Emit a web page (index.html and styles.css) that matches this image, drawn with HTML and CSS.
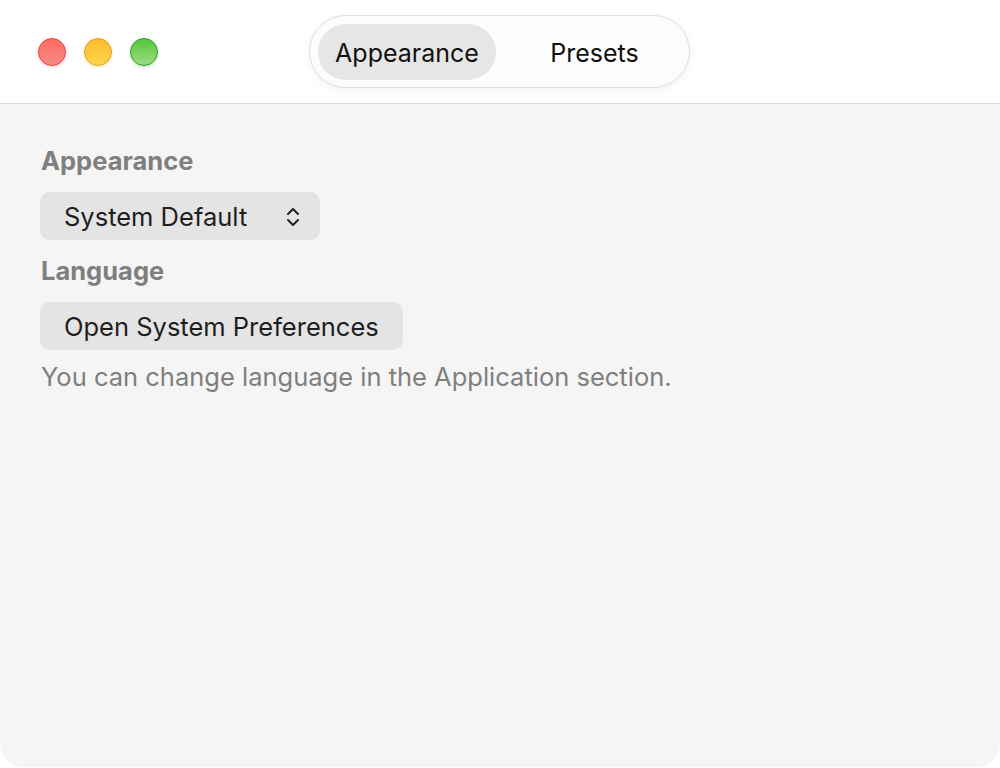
FILE: index.html
```html
<!DOCTYPE html>
<html lang="en">
<head>
<meta charset="utf-8">
<title>Settings</title>
<link rel="stylesheet" href="styles.css">
</head>
<body>
<div class="window">
  <header class="titlebar">
    <div class="lights">
      <span class="light red"></span>
      <span class="light yellow"></span>
      <span class="light green"></span>
    </div>
    <nav class="segmented">
      <span class="seg active">Appearance</span>
      <span class="seg">Presets</span>
    </nav>
  </header>
  <main class="content">
    <h2 class="label">Appearance</h2>
    <div class="select">
      <span>System Default</span>
      <svg class="chev" width="14" height="22" viewBox="0 0 14 22" fill="none" stroke="#222" stroke-width="2" stroke-linecap="round" stroke-linejoin="round">
        <path d="M2 8 L7 3 L12 8"/>
        <path d="M2 14 L7 19 L12 14"/>
      </svg>
    </div>
    <h2 class="label">Language</h2>
    <div class="button">Open System Preferences</div>
    <p class="note">You can change language in the Application section.</p>
  </main>
</div>
</body>
</html>
```
FILE: styles.css
```css
html, body {
  margin: 0;
  padding: 0;
  background: #ffffff;
}
body {
  font-family: Inter, "Noto Sans", "Liberation Sans", sans-serif;
  width: 1000px;
  height: 768px;
  overflow: hidden;
}
.window {
  width: 1000px;
  height: 767px;
  display: flex;
  flex-direction: column;
  background: #f5f5f5;
  border-radius: 0 0 24px 24px;
  overflow: hidden;
}
.titlebar {
  height: 104px;
  flex: 0 0 104px;
  background: #ffffff;
  border-bottom: 1px solid #dcdcdc;
  box-sizing: border-box;
  display: flex;
  align-items: center;
  position: relative;
}
.lights {
  display: flex;
  gap: 18px;
  padding-left: 38px;
}
.light {
  width: 28px;
  height: 28px;
  border-radius: 50%;
  box-sizing: border-box;
}
.red {
  background: linear-gradient(#ff6b63, #f58a85);
  border: 1px solid #e0443e;
  box-shadow: 0 1px 3px rgba(255, 80, 70, 0.35);
}
.yellow {
  background: linear-gradient(#fdbb2e, #fed54b);
  border: 1px solid #d9a020;
  box-shadow: 0 1px 3px rgba(240, 180, 40, 0.35);
}
.green {
  background: linear-gradient(#54c73a, #9bdc84);
  border: 1px solid #2f9a22;
  box-shadow: 0 1px 3px rgba(60, 180, 50, 0.35);
}
.segmented {
  position: absolute;
  left: 309px;
  top: 15px;
  width: 381px;
  height: 73px;
  box-sizing: border-box;
  border: 1px solid #dedede;
  border-radius: 37px;
  background: #fcfcfc;
  box-shadow: 0 2px 10px rgba(0, 0, 0, 0.06);
  display: flex;
  align-items: center;
  padding: 0 8px;
}
.seg {
  height: 56px;
  display: flex;
  align-items: center;
  justify-content: center;
  font-size: 25px;
  color: #111;
  border-radius: 28px;
  padding-top: 2px;
  box-sizing: border-box;
}
.seg.active {
  width: 178px;
  background: #e6e6e6;
}
.seg:not(.active) {
  flex: 1;
  padding-left: 12px;
}
.content {
  flex: 1;
  padding: 44px 0 0 41px;
  display: flex;
  flex-direction: column;
  align-items: flex-start;
}
.label {
  margin: 0;
  font-size: 25.5px;
  font-weight: 700;
  color: #7f7f7f;
  line-height: 26px;
  height: 26px;
}
.select, .button {
  background: #e4e4e4;
  border-radius: 10px;
  height: 48px;
  box-sizing: border-box;
  display: flex;
  align-items: center;
  font-size: 25.5px;
  color: #1e1e1e;
  margin-left: -1px;
  margin-top: 18px;
  margin-bottom: 18px;
  padding-top: 1px;
}
.select {
  width: 280px;
  padding-left: 24px;
  padding-right: 20px;
  justify-content: space-between;
}
.button {
  width: 363px;
  padding-left: 24px;
  margin-bottom: 12px;
}
.chev {
  display: block;
}
.note {
  margin: 0;
  font-size: 25.5px;
  color: #7f7f7f;
  line-height: 30px;
}
```
